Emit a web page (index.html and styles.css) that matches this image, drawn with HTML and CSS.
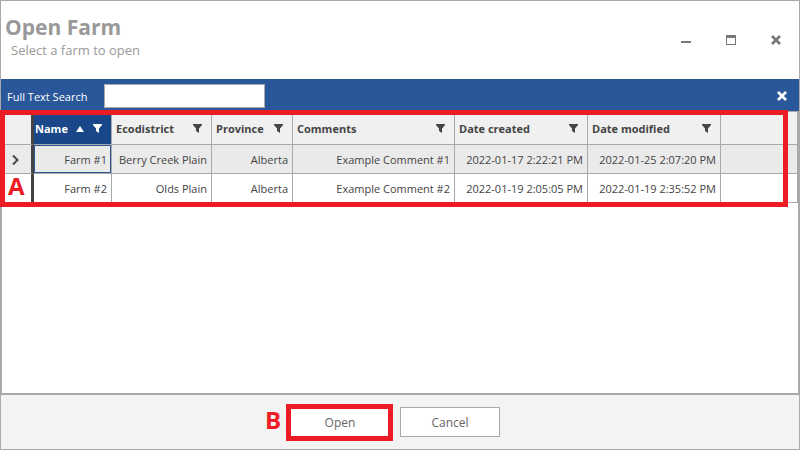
FILE: index.html
```html
<!DOCTYPE html>
<html lang="en">
<head>
<meta charset="utf-8">
<meta name="viewport" content="width=device-width, initial-scale=1">
<title>Open Farm</title>
<link rel="stylesheet" href="styles.css">
</head>
<body>
<svg class="defs" aria-hidden="true">
  <symbol id="funnel" viewBox="0 0 9 9"><path d="M0 0H9V1L6 4.5V9L3 7V4.5L0 1Z" fill="currentColor"/></symbol>
  <symbol id="cross" viewBox="0 0 10 10"><path d="M1 1L9 9M9 1L1 9" fill="none" stroke="currentColor" stroke-width="2.6"/></symbol>
</svg>
<main class="window">
  <header class="titlebar">
    <div class="heading">
      <h1>Open Farm</h1>
      <p>Select a farm to open</p>
    </div>
    <div class="controls">
      <button type="button" aria-label="Minimize"><svg viewBox="0 0 10 10"><path d="M0 6H10V8H0Z" fill="currentColor"/></svg></button>
      <button type="button" aria-label="Maximize"><svg viewBox="0 0 10 10"><path d="M0 0H10V10H0ZM1 3V9H9V3Z" fill="currentColor" fill-rule="evenodd"/></svg></button>
      <button type="button" aria-label="Close"><svg viewBox="0 0 10 10"><use href="#cross"/></svg></button>
    </div>
  </header>
  <section class="search">
    <label for="query">Full Text Search</label>
    <input id="query" type="text">
    <button type="button" aria-label="Close search"><svg viewBox="0 0 10 10"><use href="#cross"/></svg></button>
  </section>
  <section class="grid">
    <table>
      <colgroup><col class="c-mark"><col class="c-name"><col class="c-eco"><col class="c-prov"><col class="c-comments"><col class="c-date"><col class="c-date"><col></colgroup>
      <thead>
        <tr>
          <th></th>
          <th class="sorted"><div class="head"><span>Name</span><svg class="sort" viewBox="0 0 8 6"><path d="M4 0L8 6H0Z" fill="currentColor"/></svg><svg class="filter"><use href="#funnel"/></svg></div></th>
          <th><div class="head"><span>Ecodistrict</span><svg class="filter"><use href="#funnel"/></svg></div></th>
          <th><div class="head"><span>Province</span><svg class="filter"><use href="#funnel"/></svg></div></th>
          <th><div class="head"><span>Comments</span><svg class="filter"><use href="#funnel"/></svg></div></th>
          <th><div class="head"><span>Date created</span><svg class="filter"><use href="#funnel"/></svg></div></th>
          <th><div class="head"><span>Date modified</span><svg class="filter"><use href="#funnel"/></svg></div></th>
          <th></th>
        </tr>
      </thead>
      <tbody>
        <tr class="current">
          <td><svg class="chevron" viewBox="0 0 7 10"><path d="M1 0.5L5.5 5L1 9.5" fill="none" stroke="currentColor" stroke-width="2"/></svg></td>
          <td class="focused">Farm #1</td><td>Berry Creek Plain</td><td>Alberta</td><td>Example Comment #1</td><td>2022-01-17 2:22:21 PM</td><td>2022-01-25 2:07:20 PM</td><td></td>
        </tr>
        <tr>
          <td></td>
          <td>Farm #2</td><td>Olds Plain</td><td>Alberta</td><td>Example Comment #2</td><td>2022-01-19 2:05:05 PM</td><td>2022-01-19 2:35:52 PM</td><td></td>
        </tr>
      </tbody>
    </table>
    <div class="callout callout-a"><span>A</span></div>
  </section>
  <footer class="actions">
    <div class="primary">
      <button type="button">Open</button>
      <div class="callout callout-b"><span>B</span></div>
    </div>
    <button type="button">Cancel</button>
  </footer>
</main>
</body>
</html>
```
FILE: styles.css
```css
* { box-sizing: border-box; }

body {
  margin: 0;
  font-family: "Open Sans", "Noto Sans", sans-serif;
  font-size: 11px;
  line-height: 16px;
  color: #444;
}

button, input { font: inherit; color: inherit; }
.defs { position: absolute; width: 0; height: 0; }
svg { display: block; }

.window {
  display: flex;
  flex-direction: column;
  min-height: 100vh;
  border: 1px solid #a9a9a9;
  background: #fff;
}

.titlebar {
  display: flex;
  justify-content: space-between;
  min-height: 78px;
  padding: 12px 8px 0 4px;
  color: #999;
}
.titlebar h1 { margin: 0; font-size: 21px; line-height: 28px; font-weight: 700; }
.titlebar p { margin: 0 0 0 6px; font-size: 13px; line-height: 18px; }

.controls { display: flex; gap: 15px; padding-top: 12px; color: #777; }
.controls button {
  display: grid;
  place-items: center;
  width: 30px;
  height: 30px;
  padding: 0;
  border: 0;
  background: none;
}
.controls svg, .search svg { width: 10px; height: 10px; }

.search {
  display: flex;
  align-items: center;
  min-height: 32px;
  padding: 0 12px 0 6px;
  background: #2a579a;
  color: #fff;
}
.search label { width: 97px; padding-top: 4px; white-space: nowrap; }
.search input {
  width: 161px;
  height: 24px;
  margin-top: 2px;
  padding: 0 4px;
  border: 1px solid #a9a9a9;
  background: #fff;
  color: #444;
}
.search button { margin-left: auto; padding: 2px 0 0; border: 0; background: none; }

.grid {
  position: relative;
  flex: 1;
  border: 1px solid #a9a9a9;
  border-bottom-width: 2px;
}
table {
  width: 100%;
  table-layout: fixed;
  border-collapse: separate;
  border-spacing: 0;
}
.c-mark { width: 32px; }
.c-name { width: 78px; }
.c-eco { width: 100px; }
.c-prov { width: 81px; }
.c-comments { width: 162px; }
.c-date { width: 133px; }

th, td {
  border-right: 1px solid #a9a9a9;
  border-bottom: 1px solid #a9a9a9;
  padding: 1px 4px 0;
  text-align: right;
  white-space: nowrap;
}
th { height: 33px; background: #f0f0f0; }
td { height: 29px; }
th:first-child, td:first-child { border-right: 3px solid #444; }
.current td { background: #eaeaea; }
.current .focused { box-shadow: inset 0 0 0 1px #2a579a; }
.sorted { background: #19478a; color: #fff; padding-left: 1px; }

.head { display: flex; align-items: center; padding-right: 5px; }
.head .filter { width: 9px; height: 9px; margin-left: auto; }
.head .sort { width: 8px; height: 6px; margin-left: 8px; }
.chevron { width: 7px; height: 10px; margin-left: 6px; }

.callout {
  position: absolute;
  border: 5px solid #ed1c24;
  color: #ed1c24;
  font-size: 24px;
  line-height: 24px;
  font-weight: 700;
  pointer-events: none;
}
.callout span { position: absolute; }
.callout-a { top: -2px; left: -2px; right: 10px; height: 97px; }
.callout-a span { left: 3px; bottom: 4px; }
.callout-b { inset: -3px -3px -4px -4px; }
.callout-b span { right: 100%; bottom: 4px; margin-right: 10px; }

.actions {
  display: flex;
  justify-content: center;
  gap: 10px;
  padding: 12px 10px 12px 0;
  background: #f3f3f3;
}
.actions button {
  display: block;
  width: 100px;
  height: 30px;
  padding: 2px 0 0;
  border: 1px solid #a9a9a9;
  background: #fff;
  color: #666;
  font-size: 12px;
}
.primary { position: relative; }
```
